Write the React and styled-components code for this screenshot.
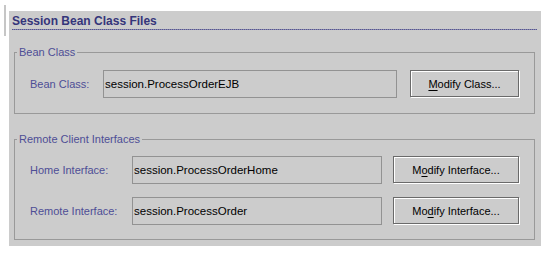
import React from "react";
import styled, { createGlobalStyle } from "styled-components";

const GlobalStyle = createGlobalStyle`
  html, body {
    margin: 0;
    padding: 0;
    background: #ffffff;
  }
  body {
    font-family: "Liberation Sans", Arial, sans-serif;
  }
`;

const Page = styled.div`
  display: flex;
  align-items: flex-start;
  width: 549px;
  height: 254px;
  box-sizing: border-box;
  padding: 5px 0 0 4px;
`;

const SideMark = styled.div`
  flex: none;
  width: 2px;
  height: 31px;
  margin-right: 3px;
  background: #c6c6c6;
`;

const Panel = styled.section`
  flex: none;
  display: flex;
  flex-direction: column;
  width: 532px;
  height: 235px;
  margin-top: 6px;
  box-sizing: border-box;
  padding: 3px 6px 0 5px;
  background: #cccccc;
`;

const Title = styled.h1`
  margin: 0 0 0 -2px;
  font-size: 12px;
  line-height: 14px;
  font-weight: bold;
  color: #35357a;
`;

const Divider = styled.div`
  height: 1px;
  margin: 1px 0 0 -2px;
  margin-right: -2px;
  background: repeating-linear-gradient(90deg, #55558f 0 1px, #8686ad 1px 2px);
`;

const Group = styled.fieldset`
  margin: ${(p) => p.$top}px 0 0 0;
  padding: 0;
  min-width: 0;
  border: 1px solid #999999;
`;

const Legend = styled.legend`
  margin-left: 2px;
  padding: 0 2px;
  font-size: 11px;
  line-height: 13px;
  color: #4e4e96;
`;

const Rows = styled.div`
  display: grid;
  grid-template-columns: ${(p) => p.$label}px 1fr ${(p) => p.$button}px;
  column-gap: ${(p) => p.$gap}px;
  row-gap: 13px;
  grid-auto-rows: 28px;
  align-items: center;
  padding: ${(p) => p.$padTop}px 14px ${(p) => p.$padBottom}px 15px;
`;

const Label = styled.label`
  font-size: 11px;
  color: #4e4e96;
  white-space: nowrap;
`;

const Field = styled.div`
  display: flex;
  align-items: center;
  height: 28px;
  box-sizing: border-box;
  padding-left: 1px;
  border: 1px solid #929292;
  background: #cccccc;
  font-size: 11.5px;
  color: #000000;
  white-space: nowrap;
  overflow: hidden;
`;

const Button = styled.button`
  justify-self: start;
  align-self: start;
  width: ${(p) => p.$width - 1}px;
  height: 27px;
  margin: 0;
  padding: 0;
  box-sizing: border-box;
  border: 1px solid #6a6a6a;
  box-shadow: inset 1px 1px 0 #ffffff, 1px 1px 0 #ffffff;
  background: #cccccc;
  font-family: "Liberation Sans", Arial, sans-serif;
  font-size: 11px;
  color: #000000;
  text-align: center;
  cursor: pointer;
`;

const Mnemonic = styled.span`
  text-decoration: underline;
  text-underline-offset: 2px;
`;

export default function App() {
  return (
    <>
      <GlobalStyle />
      <Page>
        <SideMark />
        <Panel>
          <Title>Session Bean Class Files</Title>
          <Divider />

          <Group $top={16}>
            <Legend>Bean Class</Legend>
            <Rows $label={60} $button={110} $gap={13} $padTop={11} $padBottom={15}>
              <Label>Bean Class:</Label>
              <Field>session.ProcessOrderEJB</Field>
              <Button $width={110}>
                <Mnemonic>M</Mnemonic>odify Class...
              </Button>
            </Rows>
          </Group>

          <Group $top={19}>
            <Legend>Remote Client Interfaces</Legend>
            <Rows $label={91} $button={127} $gap={11} $padTop={10} $padBottom={14}>
              <Label>Home Interface:</Label>
              <Field>session.ProcessOrderHome</Field>
              <Button $width={127}>
                M<Mnemonic>o</Mnemonic>dify Interface...
              </Button>
              <Label>Remote Interface:</Label>
              <Field>session.ProcessOrder</Field>
              <Button $width={127}>
                Mo<Mnemonic>d</Mnemonic>ify Interface...
              </Button>
            </Rows>
          </Group>
        </Panel>
      </Page>
    </>
  );
}
